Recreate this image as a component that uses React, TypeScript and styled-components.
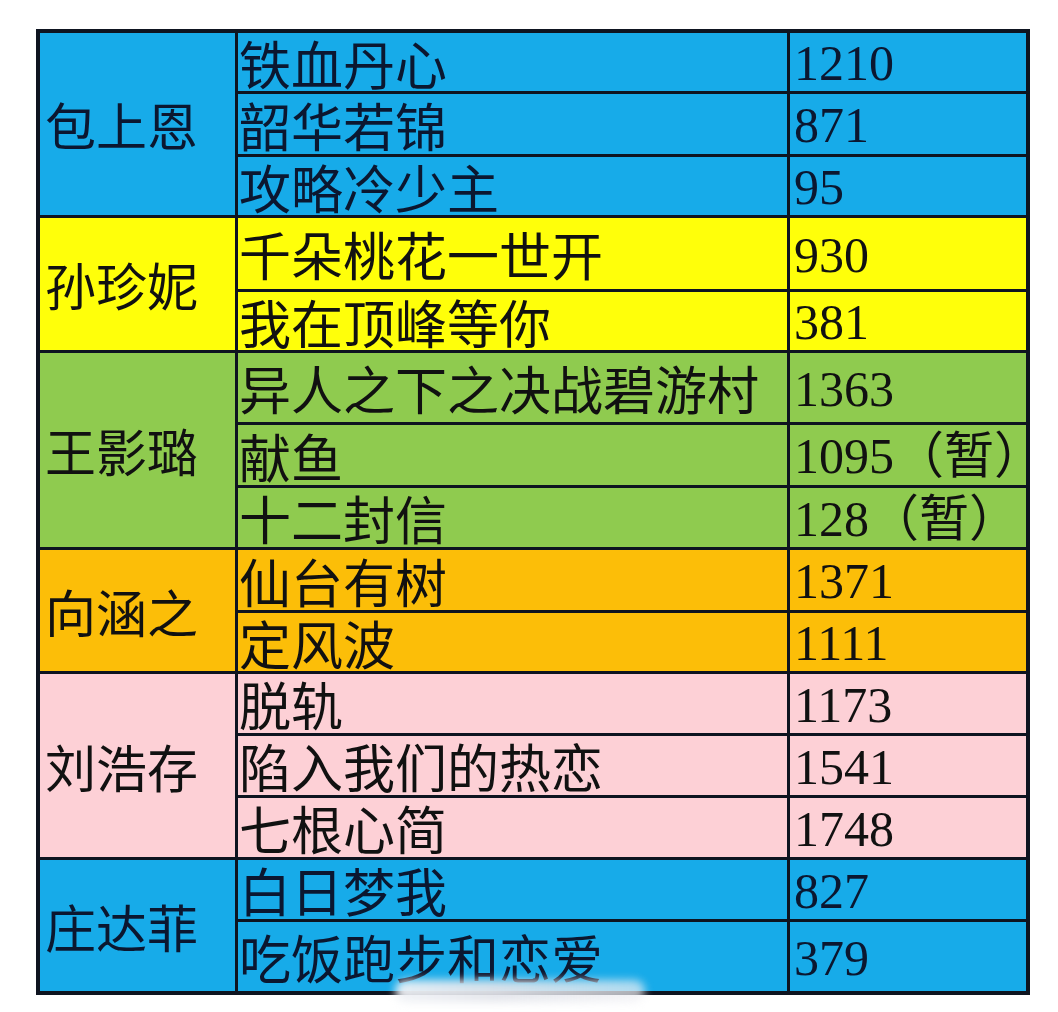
import React from "react";
import styled, { createGlobalStyle } from "styled-components";

const Global = createGlobalStyle`
  html, body { margin: 0; padding: 0; background: #ffffff; }
  body { font-family: "Noto Sans CJK SC", "Noto Sans", sans-serif; }
`;

type Item = { title: string; num: string; h: number; openRight?: boolean };
type Group = { name: string; bg: string; ink: string; items: Item[] };

const BLUE = "#17abe9";
const groups: Group[] = [
  {
    name: "包上恩",
    bg: BLUE,
    ink: "#0b1730",
    items: [
      { title: "铁血丹心", num: "1210", h: 61 },
      { title: "韶华若锦", num: "871", h: 63 },
      { title: "攻略冷少主", num: "95", h: 61 },
    ],
  },
  {
    name: "孙珍妮",
    bg: "#ffff0a",
    ink: "#111111",
    items: [
      { title: "千朵桃花一世开", num: "930", h: 74 },
      { title: "我在顶峰等你", num: "381", h: 61 },
    ],
  },
  {
    name: "王影璐",
    bg: "#8fcb4f",
    ink: "#111111",
    items: [
      { title: "异人之下之决战碧游村", num: "1363", h: 72 },
      { title: "献鱼", num: "1095（暂）", h: 63, openRight: true },
      { title: "十二封信", num: "128（暂）", h: 62 },
    ],
  },
  {
    name: "向涵之",
    bg: "#fcbe08",
    ink: "#111111",
    items: [
      { title: "仙台有树", num: "1371", h: 63 },
      { title: "定风波", num: "1111", h: 61 },
    ],
  },
  {
    name: "刘浩存",
    bg: "#fdd0d6",
    ink: "#111111",
    items: [
      { title: "脱轨", num: "1173", h: 62 },
      { title: "陷入我们的热恋", num: "1541", h: 62 },
      { title: "七根心简", num: "1748", h: 62 },
    ],
  },
  {
    name: "庄达菲",
    bg: BLUE,
    ink: "#0b1730",
    items: [
      { title: "白日梦我", num: "827", h: 62 },
      { title: "吃饭跑步和恋爱", num: "379", h: 73 },
    ],
  },
];

const Page = styled.div`
  position: relative;
  width: 1058px;
  height: 1012px;
  padding: 29px 0 0 36px;
  box-sizing: border-box;
  overflow: hidden;
`;

const Table = styled.table`
  border-collapse: collapse;
  table-layout: fixed;
  width: 994px;
  border: 4px solid #0e1420;
`;

const Row = styled.tr<{ $h: number }>`
  height: ${(p) => p.$h}px;
`;

const Cell = styled.td<{ $bg: string; $ink: string }>`
  background: ${(p) => p.$bg};
  color: ${(p) => p.$ink};
  border: 3px solid #0e1420;
  padding: 0;
  vertical-align: middle;
  white-space: nowrap;
  overflow: visible;
`;

const NameCell = styled(Cell)`
  width: 190px;
  padding-left: 5px;
  padding-top: 2px;
  font-family: "Noto Sans CJK SC", sans-serif;
  font-size: 51px;
  line-height: 1;
`;

const TitleCell = styled(Cell)`
  width: 548px;
  padding-left: 1px;
  padding-top: 2px;
  font-family: "Noto Sans CJK SC", sans-serif;
  font-size: 52px;
  line-height: 1;
`;

const NumCell = styled(Cell)<{ $open?: boolean }>`
  padding-left: 4px;
  padding-top: 3px;
  font-family: "Liberation Serif", "Noto Sans CJK SC", serif;
  font-size: 50px;
  line-height: 1;
  border-right-color: ${(p) => (p.$open ? p.$bg : "#0e1420")};
`;

const Watermark = styled.div`
  position: absolute;
  left: 395px;
  top: 980px;
  width: 250px;
  height: 22px;
  border-radius: 14px;
  background: linear-gradient(90deg, rgba(240,242,246,0.95), rgba(226,228,234,0.95) 40%, rgba(240,240,244,0.7));
  filter: blur(4px);
`;

export default function App() {
  return (
    <>
      <Global />
      <Page>
        <Table>
          <tbody>
            {groups.map((g) =>
              g.items.map((it, i) => (
                <Row key={g.name + i} $h={it.h}>
                  {i === 0 && (
                    <NameCell $bg={g.bg} $ink={g.ink} rowSpan={g.items.length}>
                      {g.name}
                    </NameCell>
                  )}
                  <TitleCell $bg={g.bg} $ink={g.ink}>{it.title}</TitleCell>
                  <NumCell $bg={g.bg} $ink={g.ink} $open={it.openRight}>
                    {it.num}
                  </NumCell>
                </Row>
              ))
            )}
          </tbody>
        </Table>
        <Watermark />
      </Page>
    </>
  );
}
